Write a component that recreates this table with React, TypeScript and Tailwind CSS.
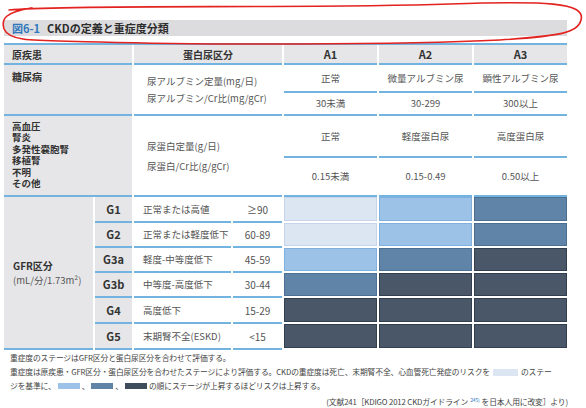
import React from 'react'

const FONT = "font-['Noto_Sans_CJK_JP','Noto_Sans',sans-serif]"

// cell colour by risk level: 0 light, 1 mid, 2 steel, 3 dark
const LEVEL = [
    'bg-[#dce6f3] border-[#c6d5ea]',
    'bg-[#9cc3e7] border-[#7fb0de]',
    'bg-[#6084a7] border-[#4c7094]',
    'bg-[#4a5768] border-[#343f4d]',
]

const gfrRows = [
    { code: 'G1', label: '正常または高値', value: '≥90', risk: [0, 1, 2] },
    { code: 'G2', label: '正常または軽度低下', value: '60-89', risk: [0, 1, 2] },
    { code: 'G3a', label: '軽度-中等度低下', value: '45-59', risk: [1, 2, 3] },
    { code: 'G3b', label: '中等度-高度低下', value: '30-44', risk: [2, 3, 3] },
    { code: 'G4', label: '高度低下', value: '15-29', risk: [3, 3, 3] },
    { code: 'G5', label: '末期腎不全(ESKD)', value: '<15', risk: [3, 3, 3] },
]

function RedCircle() {
    return (
        <svg className="absolute left-0 top-0 pointer-events-none" width="586" height="60" viewBox="0 0 586 60">
            <path
                d="M9 10 C 70 4, 300 9, 450 4 C 545 1, 586 2, 581 20 C 578 33, 560 36, 500 40 C 400 45, 200 45, 100 42 C 40 40, 10 43, 4 29 C 1 19, 5 12, 32 8"
                fill="none"
                stroke="#e3231f"
                strokeWidth="1.6"
                strokeLinecap="round"
            />
        </svg>
    )
}

export default function App() {
    return (
        <div className={`relative w-[586px] h-[408px] bg-white overflow-hidden pt-[20px] ${FONT}`}>
            {/* Title */}
            <div className="ml-[4px] w-[563px] h-[16px] bg-[#dcdcdf] flex items-center pl-[8px] gap-[7px] font-bold text-[11px] leading-none">
                <span className="text-[#2f78bd]">図6-1</span>
                <span className="text-[#2d2d2d]">CKDの定義と重症度分類</span>
            </div>

            {/* Table */}
            <div className="ml-[4px] mt-[7px] w-[563px] border-t-2 border-[#72b3df] grid grid-cols-[89px_37px_97px_49px_93px_93px_93px] grid-rows-[20px_28px_23px_42px_39px_26px_25px_25px_25px_26px_26px] gap-x-[2px] text-[9.5px] text-[#555]">
                {/* header */}
                <div className="col-span-2 bg-[#e6e6e8] border-b-2 border-[#72b3df] flex items-center pl-[8px] font-bold text-[10px] text-[#333]">原疾患</div>
                <div className="col-span-2 bg-[#e6e6e8] border-b-2 border-[#72b3df] flex items-center justify-center font-bold text-[10px] text-[#333]">蛋白尿区分</div>
                <div className="bg-[#e6e6e8] border-b-2 border-[#72b3df] flex items-center justify-center font-bold text-[11px] text-[#333]">A1</div>
                <div className="bg-[#e6e6e8] border-b-2 border-[#72b3df] flex items-center justify-center font-bold text-[11px] text-[#333]">A2</div>
                <div className="bg-[#e6e6e8] border-b-2 border-[#72b3df] flex items-center justify-center font-bold text-[11px] text-[#333]">A3</div>

                {/* diabetes */}
                <div className="col-span-2 row-span-2 bg-[#e6e6e8] border-b-2 border-[#72b3df] pl-[8px] pt-[6px] font-bold text-[10px] text-[#333] leading-[11px]">糖尿病</div>
                <div className="col-span-2 row-span-2 border-b-2 border-[#72b3df] flex flex-col justify-center gap-[5px] pl-[13px] leading-[12px]">
                    <span>尿アルブミン定量(mg/日)</span>
                    <span>尿アルブミン/Cr比(mg/gCr)</span>
                </div>
                <div className="border-b-2 border-[#72b3df] flex items-center justify-center">正常</div>
                <div className="border-b-2 border-[#72b3df] flex items-center justify-center">微量アルブミン尿</div>
                <div className="border-b-2 border-[#72b3df] flex items-center justify-center">顕性アルブミン尿</div>
                <div className="border-b-2 border-[#72b3df] flex items-center justify-center">30未満</div>
                <div className="border-b-2 border-[#72b3df] flex items-center justify-center">30-299</div>
                <div className="border-b-2 border-[#72b3df] flex items-center justify-center">300以上</div>

                {/* hypertension and others */}
                <div className="col-span-2 row-span-2 bg-[#e6e6e8] border-b-2 border-[#72b3df] pl-[8px] pt-[5px] font-bold text-[9.5px] text-[#333] leading-[11.4px] flex flex-col">
                    <span className="leading-[11.4px]">高血圧</span>
                    <span className="leading-[11.4px]">腎炎</span>
                    <span className="leading-[11.4px]">多発性嚢胞腎</span>
                    <span className="leading-[11.4px]">移植腎</span>
                    <span className="leading-[11.4px]">不明</span>
                    <span className="leading-[11.4px]">その他</span>
                </div>
                <div className="col-span-2 row-span-2 border-b-2 border-[#72b3df] flex flex-col justify-center gap-[8px] pl-[13px] leading-[12px]">
                    <span>尿蛋白定量(g/日)</span>
                    <span>尿蛋白/Cr比(g/gCr)</span>
                </div>
                <div className="border-b-2 border-[#72b3df] flex items-center justify-center">正常</div>
                <div className="border-b-2 border-[#72b3df] flex items-center justify-center">軽度蛋白尿</div>
                <div className="border-b-2 border-[#72b3df] flex items-center justify-center">高度蛋白尿</div>
                <div className="border-b-2 border-[#72b3df] flex items-center justify-center">0.15未満</div>
                <div className="border-b-2 border-[#72b3df] flex items-center justify-center">0.15-0.49</div>
                <div className="border-b-2 border-[#72b3df] flex items-center justify-center">0.50以上</div>

                {/* GFR */}
                <div className="row-span-6 bg-[#e6e6e8] border-b-2 border-[#72b3df] flex flex-col justify-center pl-[9px] leading-[14px]">
                    <span className="font-bold text-[10px] text-[#333]">GFR区分</span>
                    <span>(mL/分/1.73m²)</span>
                </div>
                {gfrRows.map((r) => (
                    <React.Fragment key={r.code}>
                        <div className="bg-[#e6e6e8] border-b-2 border-[#72b3df] flex items-center justify-center font-bold text-[11px] text-[#333]">{r.code}</div>
                        <div className="border-b-2 border-[#72b3df] flex items-center pl-[9px]">{r.label}</div>
                        <div className="border-b-2 border-[#72b3df] flex items-center justify-center text-[10px]">{r.value}</div>
                        {r.risk.map((lv, i) => (
                            <div key={i} className={`mb-[2px] border ${LEVEL[lv]}`} />
                        ))}
                    </React.Fragment>
                ))}
            </div>

            {/* Notes */}
            <div className="pl-[10px] pt-[1px] text-[7.8px] tracking-[-0.15px] leading-[14px] text-[#444] whitespace-nowrap">
                <div>重症度のステージはGFR区分と蛋白尿区分を合わせて評価する。</div>
                <div className="flex items-center">
                    <span>重症度は原疾患・GFR区分・蛋白尿区分を合わせたステージにより評価する。CKDの重症度は死亡、末期腎不全、心血管死亡発症のリスクを</span>
                    <span className="inline-block w-[25px] h-[7px] mx-[3px] bg-[#dce6f3]" />
                    <span>のステー</span>
                </div>
                <div className="flex items-center">
                    <span>ジを基準に、</span>
                    <span className="inline-block w-[22px] h-[6px] mx-[2px] bg-[#9cc3e7]" />
                    <span>、</span>
                    <span className="inline-block w-[22px] h-[6px] mx-[2px] bg-[#6084a7]" />
                    <span>、</span>
                    <span className="inline-block w-[22px] h-[6px] mx-[2px] bg-[#3f4c5c]" />
                    <span>の順にステージが上昇するほどリスクは上昇する。</span>
                </div>
                <div className="text-right pr-[18px] mt-[2px]">
                    (文献241［KDIGO 2012 CKDガイドライン<span className="relative -top-[3px] text-[5px] text-[#2f78bd] mx-[2px]">245)</span>を日本人用に改変］より)
                </div>
            </div>

            <RedCircle />
        </div>
    )
}
